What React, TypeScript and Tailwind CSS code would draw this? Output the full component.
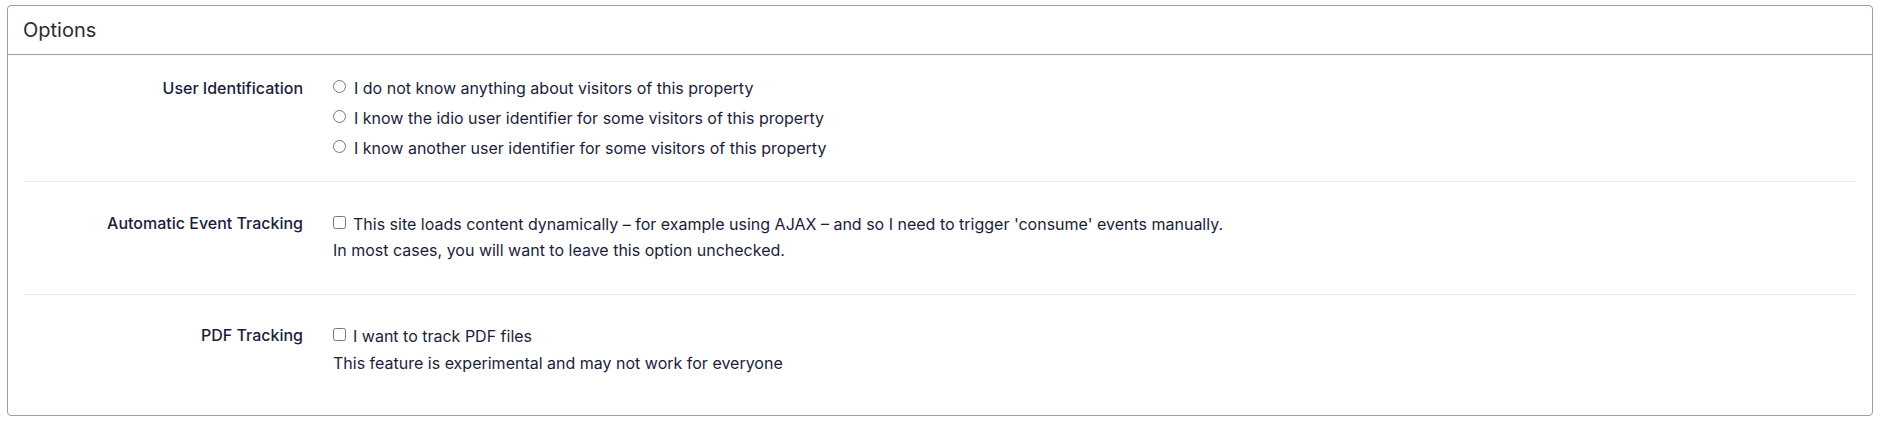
import React from "react";

const textColor = "text-[#1b1d3a]";

const Row: React.FC<{ label: string; className?: string; children: React.ReactNode }> = ({
  label,
  className,
  children,
}) => {
  return (
    <div className={`flex ${className ?? ""}`}>
      <div className="w-[279px] shrink-0 text-right font-medium leading-[27px]">{label}</div>
      <div className="ml-[30px] flex-1">{children}</div>
    </div>
  );
};

const radios = [
  "I do not know anything about visitors of this property",
  "I know the idio user identifier for some visitors of this property",
  "I know another user identifier for some visitors of this property",
];

export default function App() {
  return (
    <div className={`pt-[5px] pl-[7px] pr-[8px] font-['Inter','Liberation_Sans',sans-serif] text-[16px] ${textColor}`}>
      <div className="h-[411px] rounded-[4px] border border-[#9e9e9e] bg-white">
        <div className="flex h-[49px] items-center border-b border-[#9e9e9e] px-[15px] text-[20px] text-[#2b2b33]">
          Options
        </div>
        <div className="px-[16px]">
          <Row label="User Identification" className="pt-[18px] pb-[18px] [&>div:first-child]:leading-[30px]">
            {radios.map((r) => (
              <label key={r} className="flex h-[30px] items-center gap-[8px]">
                <input type="radio" name="uid" className="m-0 mb-[3px] h-[13px] w-[13px]" />
                <span>{r}</span>
              </label>
            ))}
          </Row>
          <div className="h-px bg-[#ececec]" />
          <Row label="Automatic Event Tracking" className="pt-[28px] pb-[30px]">
            <label className="flex h-[27px] items-center gap-[7px]">
              <input type="checkbox" className="m-0 mb-[2px] h-[13px] w-[13px]" />
              <span>
                This site loads content dynamically – for example using AJAX – and so I need to trigger 'consume'
                events manually.
              </span>
            </label>
            <div className="leading-[27px]">In most cases, you will want to leave this option unchecked.</div>
          </Row>
          <div className="h-px bg-[#ececec]" />
          <Row label="PDF Tracking" className="pt-[27px]">
            <label className="flex h-[27px] items-center gap-[7px]">
              <input type="checkbox" className="m-0 mb-[2px] h-[13px] w-[13px]" />
              <span>I want to track PDF files</span>
            </label>
            <div className="mt-px leading-[27px]">This feature is experimental and may not work for everyone</div>
          </Row>
        </div>
      </div>
    </div>
  );
}
